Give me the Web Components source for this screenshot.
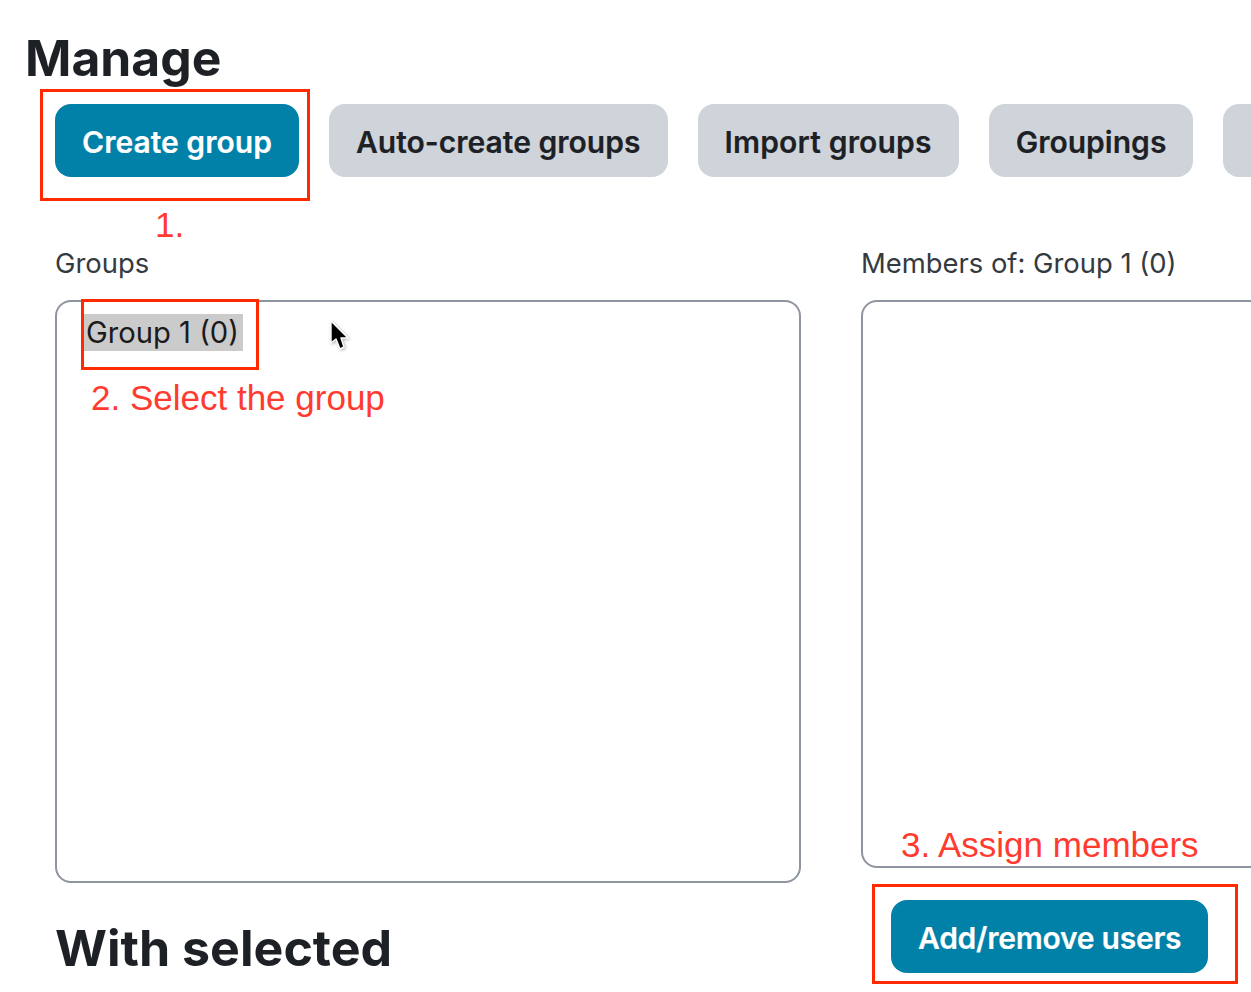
<!DOCTYPE html>
<html><head><meta charset="utf-8">
<style>
html,body{margin:0;padding:0;background:#fff;overflow:hidden;height:992px}
body{font-family:Inter,"Liberation Sans",sans-serif;color:#1d2125}
</style></head>
<body>
<manage-page></manage-page>
<template id="btn"><style>
:host{display:inline-flex;flex:none;box-sizing:border-box;align-items:center;height:73px;padding:3px 27px 0;border-radius:16px;font:600 30.05px/1 Inter,sans-serif;white-space:nowrap;background:#ced4da;color:#1d2125;-webkit-text-stroke:.15px currentColor}
:host([primary]){background:#0281a8;color:#fff}
</style><slot></slot></template>
<template id="list"><style>
:host{display:block;box-sizing:border-box;border:2px solid #8f959e;border-radius:16px;background:#fff;padding:12px 27px;font:400 29.2px/37px Inter,sans-serif;color:#1d2125}
::slotted(*){display:inline-block}
</style><slot></slot></template>
<template id="note"><style>
:host{position:absolute;font:400 35px/1 "Liberation Sans",Arial,sans-serif;color:#ff3b30;white-space:nowrap}
</style><slot></slot></template>
<template id="mark"><style>
:host{position:absolute;box-sizing:border-box;border:3px solid #ff2a00}
</style></template>
<template id="page"><style>
:host{display:block;position:relative;width:1251px;height:992px;overflow:hidden}
h1{margin:0;padding:30px 0 0 25px;height:104px;box-sizing:border-box;font:700 49.8px/56px Inter,sans-serif;color:#1d2125}
.bar{display:flex;gap:30px;padding-left:55px;width:1400px}
.imp{letter-spacing:.16px}
.cols{display:grid;grid-template-columns:746px 500px;column-gap:60px;padding:68px 0 0 55px}
.lab{font:400 27.4px/37px Inter,sans-serif;color:#343a40;height:55px;white-space:nowrap}
.l1{height:583px}
.r1{height:568px;width:500px}
h2{margin:37px 0 0 0;font:700 50.1px/55px Inter,sans-serif;color:#1d2125;white-space:nowrap}
.act{margin:32px 0 0 30px;letter-spacing:-.27px}
.sel{background:#cbcbcb;padding:0 4px 0 2px;height:37px;color:#1a1a1a}
svg{position:absolute;left:325px;top:315px}
</style>
<h1>Manage</h1>
<div class="bar">
<group-button primary>Create group</group-button>
<group-button>Auto-create groups</group-button>
<group-button class="imp">Import groups</group-button>
<group-button>Groupings</group-button>
<group-button>Overview</group-button>
</div>
<div class="cols">
<div>
<div class="lab">Groups</div>
<group-list class="l1"><span class="sel">Group 1 (0)</span></group-list>
<h2>With selected</h2>
</div>
<div>
<div class="lab">Members of: Group 1 (0)</div>
<group-list class="r1"></group-list>
<group-button primary class="act">Add/remove users</group-button>
</div>
</div>
<note-mark style="left:40px;top:89px;width:270px;height:112px"></note-mark>
<note-mark style="left:81px;top:299px;width:178px;height:71px"></note-mark>
<note-mark style="left:872px;top:884px;width:366px;height:100px"></note-mark>
<note-text style="left:155px;top:207px">1.</note-text>
<note-text style="left:91px;top:380px">2. Select the group</note-text>
<note-text style="left:901px;top:827px">3. Assign members</note-text>
<svg width="30" height="40" viewBox="0 0 30 40"><path d="M6 6V28L11 24L15 34L19 32L16 23H23Z" fill="#000" stroke="#fff" stroke-width="1.4" stroke-linejoin="round" style="filter:blur(.4px) drop-shadow(1px 1px 1.5px rgba(0,0,0,.3))"/></svg>
</template>
<script>
function def(name,id){customElements.define(name,class extends HTMLElement{constructor(){super();this.attachShadow({mode:'open'}).appendChild(document.getElementById(id).content.cloneNode(true));}});}
def('group-button','btn');def('group-list','list');def('note-text','note');def('note-mark','mark');def('manage-page','page');
</script>
</body></html>
